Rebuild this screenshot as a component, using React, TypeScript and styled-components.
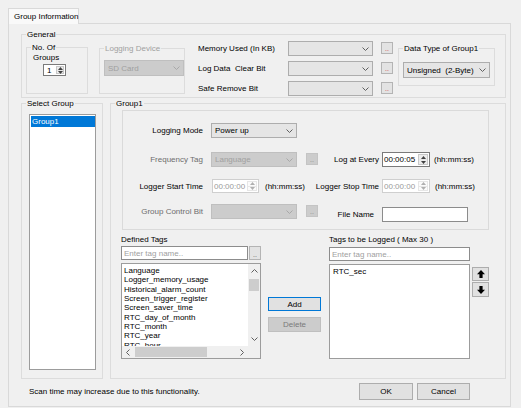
import React from "react";
import styled, { createGlobalStyle } from "styled-components";

const GlobalStyle = createGlobalStyle`
  html, body { margin: 0; padding: 0; background: #f0f0f0; }
  body {
    font-family: "Liberation Sans", Arial, sans-serif;
    font-size: 8px;
    color: #000;
  }
  #root { width: 521px; height: 408px; overflow: hidden; }
  *, *::before, *::after { box-sizing: border-box; }
`;

type Place = { $mt?: number; $ml?: number };
type Size = { $w: number; $h: number };

const Window = styled.div`
  width: 521px;
  height: 408px;
  padding: 8px 0 0 8px;
  display: flex;
  flex-direction: column;
  align-items: flex-start;
`;

const TabHeader = styled.div`
  position: relative;
  z-index: 1;
  width: 71px;
  height: 16px;
  margin-bottom: -1px;
  padding-left: 5px;
  border: 1px solid #d9d9d9;
  border-bottom: none;
  background: #f9f9f9;
  line-height: 15px;
  white-space: nowrap;
`;

const TabPage = styled.div`
  width: 503px;
  height: 384px;
  padding: 10px 4px 0 12px;
  border: 1px solid #d9d9d9;
  background: #f0f0f0;
  display: flex;
  flex-direction: column;
`;

const GroupBox = styled.div<Size & Place>`
  flex-shrink: 0;
  width: ${(p) => p.$w}px;
  height: ${(p) => p.$h}px;
  margin-top: ${(p) => p.$mt ?? 0}px;
  margin-left: ${(p) => p.$ml ?? 0}px;
  border: 1px solid #dcdcdc;
  display: flex;
  flex-direction: column;
  align-items: flex-start;
`;

const Caption = styled.div<{ $dim?: boolean }>`
  margin: -5px 0 0 4px;
  padding: 0 1px;
  height: 10px;
  line-height: 10px;
  background: #f0f0f0;
  white-space: nowrap;
  color: ${(p) => (p.$dim ? "#a0a0a0" : "#000")};
`;

const FlowRow = styled.div<Place>`
  display: flex;
  align-items: flex-start;
  margin-top: ${(p) => p.$mt ?? 0}px;
  margin-left: ${(p) => p.$ml ?? 0}px;
`;

const PlainText = styled.div<Place & { $dim?: boolean }>`
  margin-top: ${(p) => p.$mt ?? 0}px;
  margin-left: ${(p) => p.$ml ?? 0}px;
  line-height: 10px;
  height: 10px;
  white-space: pre;
  color: ${(p) => (p.$dim ? "#6d6d6d" : "#000")};
`;

/* ---------- combo box ---------- */
const ComboBox = styled.div<Size & Place & { $disabled?: boolean }>`
  flex-shrink: 0;
  width: ${(p) => p.$w}px;
  height: ${(p) => p.$h}px;
  margin-top: ${(p) => p.$mt ?? 0}px;
  margin-left: ${(p) => p.$ml ?? 0}px;
  padding: 0 3px 0 3px;
  border: 1px solid ${(p) => (p.$disabled ? "#bfbfbf" : "#adadad")};
  background: ${(p) => (p.$disabled ? "#cccccc" : "#e5e5e5")};
  color: ${(p) => (p.$disabled ? "#a0a0a0" : "#000")};
  display: flex;
  align-items: center;
  white-space: pre;
`;

const ComboValue = styled.span`
  flex: 1;
  overflow: hidden;
`;

const ChevronDown = ({ color }: { color: string }) => (
  <svg width="7" height="4" viewBox="0 0 7 4">
    <polyline points="0.5,0.5 3.5,3.5 6.5,0.5" fill="none" stroke={color} strokeWidth="1" />
  </svg>
);

function Combo(props: {
  w: number;
  h?: number;
  mt?: number;
  ml?: number;
  disabled?: boolean;
  value?: string;
}) {
  return (
    <ComboBox $w={props.w} $h={props.h ?? 15} $mt={props.mt} $ml={props.ml} $disabled={props.disabled}>
      <ComboValue>{props.value ?? ""}</ComboValue>
      <ChevronDown color={props.disabled ? "#a8a8a8" : "#606060"} />
    </ComboBox>
  );
}

/* ---------- small ".." button ---------- */
const DotButton = styled.div<Place & { $tone: "red" | "normal" | "disabled"; $w?: number; $h?: number }>`
  flex-shrink: 0;
  width: ${(p) => p.$w ?? 12}px;
  height: ${(p) => p.$h ?? 12}px;
  margin-top: ${(p) => p.$mt ?? 0}px;
  margin-left: ${(p) => p.$ml ?? 0}px;
  border: 1px solid ${(p) => (p.$tone === "disabled" ? "#c4c4c4" : "#b4b4b4")};
  background: ${(p) => (p.$tone === "disabled" ? "#cccccc" : "#e3e3e3")};
  color: ${(p) => (p.$tone === "red" ? "#d04040" : p.$tone === "disabled" ? "#8a8a8a" : "#606060")};
  display: flex;
  align-items: flex-end;
  justify-content: center;
  font-size: 7px;
  line-height: 7px;
  padding-bottom: 1px;
`;

/* ---------- spin / time picker ---------- */
const SpinBox = styled.div<Size & Place & { $disabled?: boolean }>`
  flex-shrink: 0;
  width: ${(p) => p.$w}px;
  height: ${(p) => p.$h}px;
  margin-top: ${(p) => p.$mt ?? 0}px;
  margin-left: ${(p) => p.$ml ?? 0}px;
  border: 1px solid ${(p) => (p.$disabled ? "#cfcfcf" : "#7a7a7a")};
  background: #fff;
  color: ${(p) => (p.$disabled ? "#9a9a9a" : "#000")};
  display: flex;
  align-items: stretch;
`;

const SpinValue = styled.div<{ $pad: number }>`
  flex: 1;
  display: flex;
  align-items: center;
  padding-left: ${(p) => p.$pad}px;
  white-space: nowrap;
  overflow: hidden;
`;

const SpinButtons = styled.div<{ $disabled?: boolean; $w: number }>`
  width: ${(p) => p.$w}px;
  margin: 1px;
  display: flex;
  flex-direction: column;
  border: 1px solid ${(p) => (p.$disabled ? "#e6e6e6" : "#c8c8c8")};
  background: ${(p) => (p.$disabled ? "#fbfbfb" : "#ededed")};
`;

const SpinHalf = styled.div<{ $line?: string }>`
  flex: 1;
  display: flex;
  align-items: center;
  justify-content: center;
  & + & {
    border-top: 1px solid ${(p) => p.$line ?? "#c8c8c8"};
  }
`;

function Spin(props: {
  w: number;
  h: number;
  mt?: number;
  ml?: number;
  disabled?: boolean;
  value: string;
  btnW?: number;
  pad?: number;
}) {
  const c = props.disabled ? "#b0b0b0" : "#404040";
  const line = props.disabled ? "#e6e6e6" : "#c8c8c8";
  return (
    <SpinBox $w={props.w} $h={props.h} $mt={props.mt} $ml={props.ml} $disabled={props.disabled}>
      <SpinValue $pad={props.pad ?? 1}>{props.value}</SpinValue>
      <SpinButtons $disabled={props.disabled} $w={props.btnW ?? 10}>
        <SpinHalf $line={line}>
          <svg width="5" height="3" viewBox="0 0 5 3">
            <polygon points="0,3 2.5,0 5,3" fill={c} />
          </svg>
        </SpinHalf>
        <SpinHalf $line={line}>
          <svg width="5" height="3" viewBox="0 0 5 3">
            <polygon points="0,0 5,0 2.5,3" fill={c} />
          </svg>
        </SpinHalf>
      </SpinButtons>
    </SpinBox>
  );
}

/* ---------- text box ---------- */
const TextInput = styled.input<Size & Place>`
  flex-shrink: 0;
  width: ${(p) => p.$w}px;
  height: ${(p) => p.$h}px;
  margin: ${(p) => p.$mt ?? 0}px 0 0 ${(p) => p.$ml ?? 0}px;
  padding: 0 0 0 2px;
  border: 1px solid #8c8c8c;
  background: #fff;
  font: inherit;
  color: #000;
  outline: none;
  &::placeholder {
    color: #a0a0a0;
  }
`;

/* ---------- push buttons ---------- */
const PushButton = styled.button<Size & Place & { $tone?: "default" | "focused" | "disabled" }>`
  flex-shrink: 0;
  width: ${(p) => p.$w}px;
  height: ${(p) => p.$h}px;
  margin: ${(p) => p.$mt ?? 0}px 0 0 ${(p) => p.$ml ?? 0}px;
  padding: 0;
  font: inherit;
  border: 1px solid
    ${(p) => (p.$tone === "focused" ? "#0078d7" : p.$tone === "disabled" ? "#bfbfbf" : "#adadad")};
  background: ${(p) => (p.$tone === "disabled" ? "#cccccc" : "#e1e1e1")};
  color: ${(p) => (p.$tone === "disabled" ? "#7a7a7a" : "#000")};
  display: flex;
  align-items: center;
  justify-content: center;
`;

/* ---------- list boxes ---------- */
const ListFrame = styled.div<Size & Place>`
  flex-shrink: 0;
  width: ${(p) => p.$w}px;
  height: ${(p) => p.$h}px;
  margin-top: ${(p) => p.$mt ?? 0}px;
  margin-left: ${(p) => p.$ml ?? 0}px;
  border: 1px solid #9c9c9c;
  background: #fff;
  display: flex;
  flex-direction: column;
  overflow: hidden;
`;

const ListBody = styled.div`
  flex: 1;
  min-height: 0;
  display: flex;
`;

const ListItems = styled.div<{ $pt: number; $pl: number; $lh: number }>`
  flex: 1;
  min-width: 0;
  overflow: hidden;
  padding: ${(p) => p.$pt}px 0 0 ${(p) => p.$pl}px;
  line-height: ${(p) => p.$lh}px;
  white-space: nowrap;
`;

const ListItem = styled.div<{ $selected?: boolean }>`
  padding-left: ${(p) => (p.$selected ? 1 : 0)}px;
  background: ${(p) => (p.$selected ? "#0078d7" : "transparent")};
  color: ${(p) => (p.$selected ? "#fff" : "#000")};
`;

const VScrollBar = styled.div`
  width: 12px;
  background: #f0f0f0;
  display: flex;
  flex-direction: column;
  align-items: center;
`;

const ScrollArrow = styled.div<{ $w?: number; $h?: number }>`
  flex-shrink: 0;
  width: ${(p) => (p.$w ? `${p.$w}px` : "100%")};
  height: ${(p) => (p.$h ? `${p.$h}px` : "100%")};
  display: flex;
  align-items: center;
  justify-content: center;
`;

const VThumb = styled.div`
  width: 10px;
  height: 12px;
  margin-top: 1px;
  background: #cdcdcd;
`;

const HScrollBar = styled.div`
  height: 12px;
  flex-shrink: 0;
  background: #f0f0f0;
  display: flex;
  align-items: center;
`;

const HThumb = styled.div`
  width: 72px;
  height: 10px;
  margin-left: 1px;
  background: #cdcdcd;
`;

const Grow = styled.div`
  flex: 1;
`;

const ScrollCorner = styled.div`
  width: 12px;
  height: 12px;
  background: #f0f0f0;
`;

const ArrowGlyph = ({ dir }: { dir: "up" | "down" | "left" | "right" }) => {
  const pts =
    dir === "up"
      ? "0.5,3.5 3.5,0.5 6.5,3.5"
      : dir === "down"
      ? "0.5,0.5 3.5,3.5 6.5,0.5"
      : dir === "left"
      ? "3.5,0.5 0.5,3.5 3.5,6.5"
      : "0.5,0.5 3.5,3.5 0.5,6.5";
  const horiz = dir === "up" || dir === "down";
  return (
    <svg width={horiz ? 7 : 4} height={horiz ? 4 : 7} viewBox={horiz ? "0 0 7 4" : "0 0 4 7"}>
      <polyline points={pts} fill="none" stroke="#606060" strokeWidth="1" />
    </svg>
  );
};

/* ---------- settings panel ---------- */
const SettingsPanel = styled.div`
  flex-shrink: 0;
  width: 367px;
  height: 120px;
  margin: 1px 0 0 11px;
  border: 1px solid #dadada;
  display: flex;
  flex-direction: column;
`;

const SettingsRow = styled.div<{ $mt: number; $h: number; $align?: string }>`
  display: flex;
  align-items: ${(p) => p.$align ?? "center"};
  height: ${(p) => p.$h}px;
  margin-top: ${(p) => p.$mt}px;
`;

const FieldLabel = styled.div<{ $w: number; $dim?: boolean; $pr?: number; $mt?: number; $ml?: number }>`
  flex-shrink: 0;
  width: ${(p) => p.$w}px;
  height: 15px;
  margin-top: ${(p) => p.$mt ?? 0}px;
  margin-left: ${(p) => p.$ml ?? 0}px;
  padding-right: ${(p) => p.$pr ?? 0}px;
  display: flex;
  align-items: center;
  justify-content: flex-end;
  white-space: nowrap;
  color: ${(p) => (p.$dim ? "#6d6d6d" : "#000")};
`;

const Cell = styled.div<{ $w: number; $ml?: number }>`
  flex-shrink: 0;
  width: ${(p) => p.$w}px;
  margin-left: ${(p) => p.$ml ?? 0}px;
  display: flex;
  align-items: flex-start;
`;

const UnitText = styled.div<{ $ml: number }>`
  margin-left: ${(p) => p.$ml}px;
  align-self: center;
  white-space: nowrap;
`;

/* ---------- memory grid in General ---------- */
const MemoryGrid = styled.div<Place>`
  display: flex;
  flex-direction: column;
  gap: 5px;
  margin-top: ${(p) => p.$mt ?? 0}px;
  margin-left: ${(p) => p.$ml ?? 0}px;
`;

const MemoryRow = styled.div`
  display: flex;
  align-items: flex-start;
  height: 15px;
`;

const MemoryLabel = styled.div`
  width: 90px;
  height: 15px;
  line-height: 15px;
  white-space: pre;
`;

/* ---------- tag columns ---------- */
const TagColumn = styled.div<{ $w: number; $ml?: number }>`
  flex-shrink: 0;
  width: ${(p) => p.$w}px;
  margin-left: ${(p) => p.$ml ?? 0}px;
  display: flex;
  flex-direction: column;
  align-items: flex-start;
`;

const InputRow = styled.div<Place>`
  display: flex;
  margin-top: ${(p) => p.$mt ?? 0}px;
`;

const MoveButton = styled.div<Place & { $h: number }>`
  width: 17px;
  height: ${(p) => p.$h}px;
  margin-top: ${(p) => p.$mt ?? 0}px;
  border: 1px solid #adadad;
  background: #e1e1e1;
  display: flex;
  align-items: center;
  justify-content: center;
`;

const BoldArrow = ({ down }: { down?: boolean }) => (
  <svg width="8" height="8" viewBox="0 0 8 8" style={down ? { transform: "rotate(180deg)" } : undefined}>
    <polygon points="4,0 8,4.2 5.6,4.2 5.6,8 2.4,8 2.4,4.2 0,4.2" fill="#000" />
  </svg>
);

const Footer = styled.div`
  display: flex;
  align-items: center;
  height: 17px;
  margin-top: 4px;
  padding-right: 36px;
`;

const FooterNote = styled.div`
  margin-left: 8px;
  white-space: nowrap;
  flex: 1;
`;

const definedTags = [
  "Language",
  "Logger_memory_usage",
  "Historical_alarm_count",
  "Screen_trigger_register",
  "Screen_saver_time",
  "RTC_day_of_month",
  "RTC_month",
  "RTC_year",
  "RTC_hour",
];

export default function App() {
  return (
    <>
      <GlobalStyle />
      <Window>
        <TabHeader>Group Information</TabHeader>
        <TabPage>
          {/* General */}
          <GroupBox $w={485} $h={64}>
            <Caption>General</Caption>
            <FlowRow>
              <GroupBox $w={62} $h={47} $mt={7} $ml={4}>
                <Caption>No. Of</Caption>
                <PlainText $ml={6}>Groups</PlainText>
                <Spin w={23} h={12} mt={1} ml={16} value="1" btnW={8} pad={3} />
              </GroupBox>

              <GroupBox $w={86} $h={46} $mt={8} $ml={11}>
                <Caption $dim>Logging Device</Caption>
                <Combo w={80} h={16} mt={6} ml={4} disabled value="SD Card" />
              </GroupBox>

              <MemoryGrid $mt={1} $ml={13}>
                <MemoryRow>
                  <MemoryLabel>Memory Used (In KB)</MemoryLabel>
                  <Combo w={85} />
                  <DotButton $tone="red" $ml={8} $mt={1}>..</DotButton>
                </MemoryRow>
                <MemoryRow>
                  <MemoryLabel>{"Log Data  Clear Bit"}</MemoryLabel>
                  <Combo w={85} />
                  <DotButton $tone="red" $ml={8} $mt={1}>..</DotButton>
                </MemoryRow>
                <MemoryRow>
                  <MemoryLabel>Safe Remove Bit</MemoryLabel>
                  <Combo w={85} />
                  <DotButton $tone="red" $ml={8} $mt={1}>..</DotButton>
                </MemoryRow>
              </MemoryGrid>

              <GroupBox $w={97} $h={38} $mt={8} $ml={5}>
                <Caption>Data Type of Group1</Caption>
                <Combo w={87} h={16} mt={8} ml={4} value={"Unsigned  (2-Byte)"} />
              </GroupBox>
            </FlowRow>
          </GroupBox>

          {/* Main */}
          <FlowRow $mt={5}>
            <GroupBox $w={82} $h={276}>
              <Caption>Select Group</Caption>
              <ListFrame $w={67} $h={256} $mt={5} $ml={7}>
                <ListItems $pt={1} $pl={1} $lh={11}>
                  <ListItem $selected>Group1</ListItem>
                </ListItems>
              </ListFrame>
            </GroupBox>

            <GroupBox $w={396} $h={276} $ml={7}>
              <Caption>Group1</Caption>
              <SettingsPanel>
                <SettingsRow $mt={12} $h={15}>
                  <FieldLabel $w={80}>Logging Mode</FieldLabel>
                  <Cell $w={108} $ml={8}>
                    <Combo w={86} value="Power up" />
                  </Cell>
                </SettingsRow>

                <SettingsRow $mt={14} $h={15}>
                  <FieldLabel $w={80} $dim>
                    Frequency Tag
                  </FieldLabel>
                  <Cell $w={108} $ml={8}>
                    <Combo w={86} disabled value="Language" />
                    <DotButton $tone="disabled" $ml={9} $mt={1}>..</DotButton>
                  </Cell>
                  <FieldLabel $w={60}>Log at Every</FieldLabel>
                  <Cell $w={100} $ml={3}>
                    <Spin w={48} h={15} value="00:00:05" />
                    <UnitText $ml={4}>(hh:mm:ss)</UnitText>
                  </Cell>
                </SettingsRow>

                <SettingsRow $mt={12} $h={14}>
                  <FieldLabel $w={80}>Logger Start Time</FieldLabel>
                  <Cell $w={108} $ml={8}>
                    <Spin w={47} h={14} ml={1} disabled value="00:00:00" />
                    <UnitText $ml={6}>(hh:mm:ss)</UnitText>
                  </Cell>
                  <FieldLabel $w={60}>Logger Stop Time</FieldLabel>
                  <Cell $w={100} $ml={3}>
                    <Spin w={48} h={14} disabled value="00:00:00" />
                    <UnitText $ml={5}>(hh:mm:ss)</UnitText>
                  </Cell>
                </SettingsRow>

                <SettingsRow $mt={11} $h={18} $align="flex-start">
                  <FieldLabel $w={80} $dim>
                    Group Control Bit
                  </FieldLabel>
                  <Cell $w={108} $ml={8}>
                    <Combo w={86} disabled />
                    <DotButton $tone="disabled" $ml={9} $mt={1}>..</DotButton>
                  </Cell>
                  <FieldLabel $w={60} $pr={5} $mt={3}>
                    File Name
                  </FieldLabel>
                  <Cell $w={100} $ml={3}>
                    <TextInput $w={86} $h={15} $mt={3} />
                  </Cell>
                </SettingsRow>
              </SettingsPanel>

              <FlowRow $mt={5} $ml={10}>
                <TagColumn $w={140}>
                  <PlainText>Defined Tags</PlainText>
                  <InputRow $mt={1}>
                    <TextInput $w={127} $h={14} placeholder="Enter tag name.." />
                    <DotButton $tone="normal" $w={12} $h={14} $ml={1}>..</DotButton>
                  </InputRow>
                  <ListFrame $w={140} $h={96} $mt={3}>
                    <ListBody>
                      <ListItems $pt={2} $pl={2} $lh={9.33}>
                        {definedTags.map((t) => (
                          <ListItem key={t}>{t}</ListItem>
                        ))}
                      </ListItems>
                      <VScrollBar>
                        <ScrollArrow $h={14}>
                          <ArrowGlyph dir="up" />
                        </ScrollArrow>
                        <VThumb />
                        <Grow />
                        <ScrollArrow $h={14}>
                          <ArrowGlyph dir="down" />
                        </ScrollArrow>
                      </VScrollBar>
                    </ListBody>
                    <HScrollBar>
                      <ScrollArrow $w={12}>
                        <ArrowGlyph dir="left" />
                      </ScrollArrow>
                      <HThumb />
                      <Grow />
                      <ScrollArrow $w={12}>
                        <ArrowGlyph dir="right" />
                      </ScrollArrow>
                      <ScrollCorner />
                    </HScrollBar>
                  </ListFrame>
                </TagColumn>

                <TagColumn $w={53} $ml={7}>
                  <PushButton $w={53} $h={14} $mt={62} $tone="focused">
                    Add
                  </PushButton>
                  <PushButton $w={53} $h={15} $mt={6} $tone="disabled">
                    Delete
                  </PushButton>
                </TagColumn>

                <TagColumn $w={141} $ml={8}>
                  <PlainText>Tags to be Logged ( Max 30 )</PlainText>
                  <TextInput $w={141} $h={14} $mt={2} placeholder="Enter tag name.." />
                  <ListFrame $w={141} $h={95} $mt={3}>
                    <ListItems $pt={2} $pl={3} $lh={9.33}>
                      <ListItem>RTC_sec</ListItem>
                    </ListItems>
                  </ListFrame>
                </TagColumn>

                <TagColumn $w={17} $ml={2}>
                  <MoveButton $h={14} $mt={32}>
                    <BoldArrow />
                  </MoveButton>
                  <MoveButton $h={15} $mt={1}>
                    <BoldArrow down />
                  </MoveButton>
                </TagColumn>
              </FlowRow>
            </GroupBox>
          </FlowRow>

          <Footer>
            <FooterNote>Scan time may increase due to this functionality.</FooterNote>
            <PushButton $w={54} $h={17}>
              OK
            </PushButton>
            <PushButton $w={53} $h={17} $ml={4}>
              Cancel
            </PushButton>
          </Footer>
        </TabPage>
      </Window>
    </>
  );
}
